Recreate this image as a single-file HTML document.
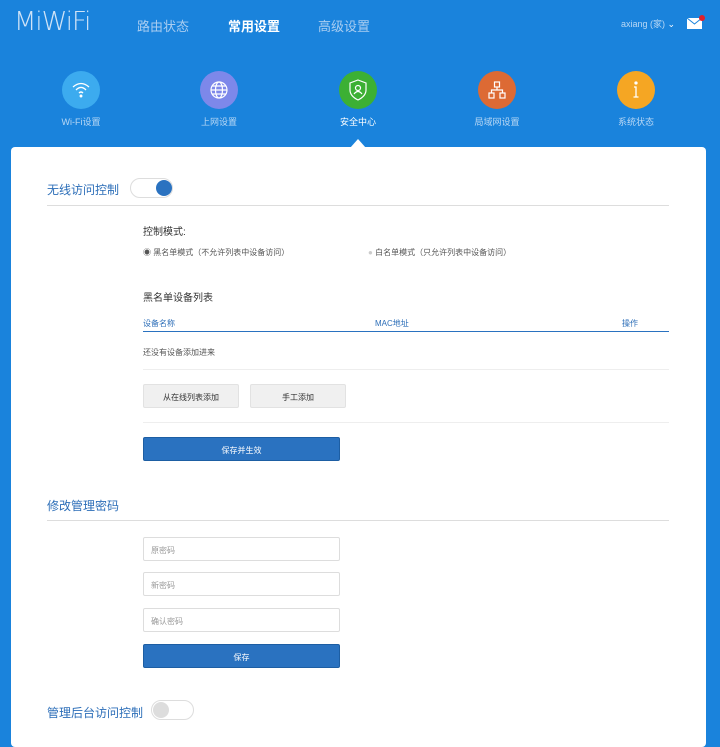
<!DOCTYPE html>
<html><head><meta charset="utf-8"><style>
*{margin:0;padding:0;box-sizing:border-box}
body{width:720px;height:729px;overflow:hidden;background:#1a83dc;font-family:"Liberation Sans","Noto Sans CJK SC",sans-serif;position:relative}
.a{position:absolute}
.logo{left:14px;top:7px;color:#cfe3f7;font-size:26px;letter-spacing:-1px;font-family:"DejaVu Sans","Liberation Sans",sans-serif;font-weight:200}
.nav{top:16px;font-size:13px;color:#a9cdf1}
.circ{width:38px;height:38px;border-radius:50%;top:71px}
.lbl{top:115px;font-size:9px;color:#b9d8f5;width:100px;text-align:center}
.card{left:11px;top:147px;width:695px;height:600px;background:#fff;border-radius:4px}
.t{font-size:11px;color:#333}
.h{font-size:12px;color:#2c6eb8}
.line{height:1px;background:#ddd}
.btn,.pb,.in{line-height:10px;padding-top:8px;text-align:center}
.btn{height:24px;background:#f0f0f0;border:1px solid #e2e2e2;font-size:8px;color:#333;border-radius:2px}
.pb{height:24px;background:#2a72c0;border:1px solid #1d5ea3;color:#fff;font-size:8px;border-radius:2px}
.in{width:197px;height:24px;border:1px solid #ddd;border-radius:2px;font-size:8px;color:#999;padding-left:7px;left:143px;text-align:left}
</style></head><body>
<div class="a logo">MiWiFi</div>
<div class="a nav" style="left:137px">路由状态</div>
<div class="a nav" style="left:228px;color:#fff;font-weight:bold">常用设置</div>
<div class="a nav" style="left:318px">高级设置</div>
<div class="a" style="left:621px;top:17px;font-size:9px;color:#b9d8f5">axiang (家) <span style="color:#fff">⌄</span></div>
<svg class="a" style="left:686px;top:14px" width="20" height="16"><rect x="1" y="4" width="15" height="11" fill="#fff"/><path d="M1 4 L8.5 10 L16 4" stroke="#1a83dc" fill="none"/><circle cx="16" cy="4" r="3" fill="#e0202a"/></svg>
<div class="a circ" style="left:62px;background:#3cabef"></div>
<svg class="a" style="left:70px;top:79px" width="22" height="22" fill="none" stroke="#fff" stroke-width="1.3"><path d="M3 8 Q11 1 19 8"/><path d="M6 11 Q11 6 16 11"/><path d="M9 14 Q11 12 13 14"/><circle cx="11" cy="17" r="0.8" fill="#fff"/></svg>
<div class="a lbl" style="left:31px">Wi-Fi设置</div>
<div class="a circ" style="left:200px;background:#7d88ea"></div>
<svg class="a" style="left:208px;top:79px" width="22" height="22" fill="none" stroke="#fff" stroke-width="1.2"><circle cx="11" cy="11" r="8"/><ellipse cx="11" cy="11" rx="3.5" ry="8"/><path d="M3 11H19M4.5 7H17.5M4.5 15H17.5"/></svg>
<div class="a lbl" style="left:169px">上网设置</div>
<div class="a circ" style="left:339px;background:#3cb034"></div>
<svg class="a" style="left:347px;top:78px" width="22" height="24" fill="none" stroke="#fff" stroke-width="1.2"><path d="M11 2 L19 5 V12 Q19 18 11 22 Q3 18 3 12 V5 Z"/><circle cx="11" cy="10" r="2.5"/><path d="M7 16 Q11 11 15 16"/></svg>
<div class="a lbl" style="left:308px;color:#fff">安全中心</div>
<div class="a circ" style="left:478px;background:#dd6a34"></div>
<svg class="a" style="left:486px;top:79px" width="22" height="22" fill="none" stroke="#fff" stroke-width="1.2"><rect x="8.5" y="3" width="5" height="5"/><rect x="3" y="14" width="5" height="5"/><rect x="14" y="14" width="5" height="5"/><path d="M11 8V11M5.5 14V11H16.5V14"/></svg>
<div class="a lbl" style="left:447px">局域网设置</div>
<div class="a circ" style="left:617px;background:#f5a623"></div>
<svg class="a" style="left:626px;top:80px" width="20" height="20" fill="none" stroke="#fff" stroke-width="1.3"><circle cx="10" cy="3" r="1" fill="#fff"/><path d="M8 7H10V17M7.5 17H12.5"/></svg>
<div class="a lbl" style="left:586px">系统状态</div>
<div class="a" style="left:350px;top:139px;width:0;height:0;border-left:8px solid transparent;border-right:8px solid transparent;border-bottom:9px solid #fff"></div>
<div class="a card"></div>
<div class="a h" style="left:47px;top:181px">无线访问控制</div>
<div class="a" style="left:130px;top:178px;width:43px;height:20px;border:1px solid #ddd;border-radius:10px;background:#fff"></div>
<div class="a" style="left:156px;top:180px;width:16px;height:16px;border-radius:50%;background:#2a72c0"></div>
<div class="a line" style="left:47px;top:205px;width:622px"></div>
<div class="a t" style="left:143px;top:223px;font-size:10px">控制模式:</div>
<div class="a t" style="left:143px;top:247px;font-size:8px;color:#555">◉ 黑名单模式（不允许列表中设备访问）</div>
<div class="a t" style="left:368px;top:247px;font-size:8px;color:#555"><span style="color:#ccc">●</span> 白名单模式（只允许列表中设备访问）</div>
<div class="a t" style="left:143px;top:289px;font-size:10px">黑名单设备列表</div>
<div class="a" style="left:143px;top:318px;font-size:8px;color:#2c6eb8">设备名称</div>
<div class="a" style="left:375px;top:318px;font-size:8px;color:#2c6eb8">MAC地址</div>
<div class="a" style="left:622px;top:318px;font-size:8px;color:#2c6eb8">操作</div>
<div class="a" style="left:143px;top:331px;width:526px;height:1px;background:#2a72c0"></div>
<div class="a t" style="left:143px;top:347px;font-size:8px;color:#555">还没有设备添加进来</div>
<div class="a line" style="left:143px;top:369px;width:526px;background:#eee"></div>
<div class="a btn" style="left:143px;top:384px;width:96px">从在线列表添加</div>
<div class="a btn" style="left:250px;top:384px;width:96px">手工添加</div>
<div class="a line" style="left:143px;top:422px;width:526px;background:#eee"></div>
<div class="a pb" style="left:143px;top:437px;width:197px">保存并生效</div>
<div class="a h" style="left:47px;top:497px">修改管理密码</div>
<div class="a line" style="left:47px;top:520px;width:622px"></div>
<div class="a in" style="top:537px">原密码</div>
<div class="a in" style="top:572px">新密码</div>
<div class="a in" style="top:608px">确认密码</div>
<div class="a pb" style="left:143px;top:644px;width:197px">保存</div>
<div class="a h" style="left:47px;top:704px">管理后台访问控制</div>
<div class="a" style="left:151px;top:700px;width:43px;height:20px;border:1px solid #ddd;border-radius:10px;background:#fff"></div>
<div class="a" style="left:153px;top:702px;width:16px;height:16px;border-radius:50%;background:#ddd"></div>
</body></html>
